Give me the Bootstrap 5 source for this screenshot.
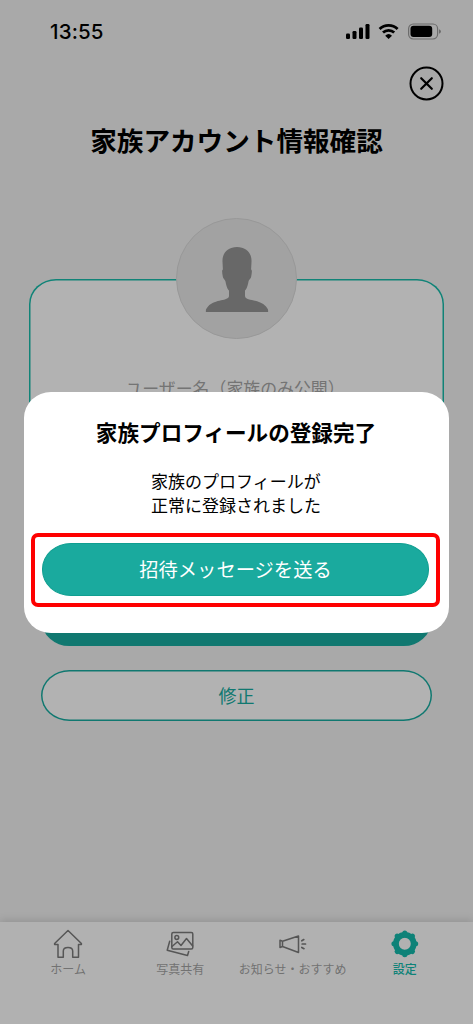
<!DOCTYPE html>
<html lang="ja">
<head>
<meta charset="utf-8">
<meta name="viewport" content="width=device-width, initial-scale=1">
<title>家族アカウント情報確認</title>
<link href="https://cdn.jsdelivr.net/npm/bootstrap@5.3.0/dist/css/bootstrap.min.css" rel="stylesheet">
<style>
  body { font-family: "Noto Sans CJK JP", sans-serif; background: #a9a9a9; color: #000; height: 1024px; overflow: hidden; line-height: 1; }
  svg { display: block; flex: none; }
  .status-bar { height: 63px; padding: 1px 32px 0 50px; }
  .clock { font: 500 20.5px/1 Inter, sans-serif; letter-spacing: .15px; }
  .close-row { height: 41px; padding-right: 29px; }
  .page-title { font-size: 26.6px; font-weight: 700; line-height: 36px; margin: 18px 0 0; }
  .profile { margin: 121px 29px 0; height: 330px; padding-top: 1px; box-shadow: inset 0 0 0 1.5px #108377; border-radius: 27px / 25px; background: #b2b2b2; }
  .avatar { width: 121px; height: 121px; margin-top: -62px; background: #a2a2a2; border: 1px solid #989898; }
  .avatar svg { transform: translate(.5px, 1px); }
  .field-label { font-size: 16.9px; color: #747474; margin-top: 39px; line-height: 20px; white-space: nowrap; font-weight: 400; transform: translateX(-1.5px); }
  .action-list { margin: -12px 41px 0; }
  .pill { border-radius: 29px / 26px; border: 0; padding: 0; font-weight: 400; line-height: 1; }
  .pill-confirm { background: #107870; height: 49px; margin: 0 1px; }
  .pill-edit { background: #b2b2b2; height: 51px; box-shadow: inset 0 0 0 1.5px #107870; color: #107870; font-size: 18px; margin-top: 24px; padding-bottom: 2px; }
  .tabs { height: 102px; background: #b1b1b1; box-shadow: 0 -2px 8px rgba(0,0,0,.13); padding: 7px 12px 0; }
  .tab-item { font-size: 12px; color: #727272; gap: 4px; white-space: nowrap; }
  .tab-item.current { color: #0e8278; font-weight: 500; }
  .dialog-box { width: 424.5px; height: 241px; border-radius: 27px / 26px; background: #fff; padding: 26px 8px 0 7px; }
  .dialog-title { font-size: 21.6px; font-weight: 700; line-height: 28px; }
  .dialog-text { font-size: 17px; line-height: 24.5px; margin: 23px 0 15px; }
  .focus-frame { border: 4px solid #fe0000; border-radius: 7px; height: 74px; width: 409px; padding: 6px 7px 0; margin-left: -2px; }
  .pill-send { background: #1aaa9e; border: 1px solid #109f91; color: #fff; font-size: 19.3px; height: 53px; width: 387px; padding: 2px 0 0 1px; }
</style>
</head>
<body class="d-flex flex-column">
  <header class="status-bar d-flex align-items-center justify-content-between">
    <span class="clock">13:55</span>
    <div class="d-flex align-items-center">
      <svg width="96" height="18" viewBox="0 0 96 18">
        <g><rect x="1" y="10.500" width="4" height="5.500" rx="1.200"/><rect x="7.500" y="8" width="4" height="8" rx="1.200"/><rect x="14" y="4.500" width="4" height="11.500" rx="1.200"/><rect x="20.500" y="1" width="4" height="15" rx="1.200"/></g>
        <g fill="none" stroke="#000" stroke-width="2.800"><path d="M34.600 5.900a13 13 0 0 1 18 0"/><path d="M38 9.500a8.200 8.200 0 0 1 11.200 0"/></g>
        <path d="M40.200 12.700a5 5 0 0 1 6.800 0L43.600 16Z"/>
        <rect x="63.600" y="1" width="29" height="15" rx="4.700" fill="none" stroke="#6c6c6c" stroke-width="1.200"/>
        <rect x="65.500" y="2.800" width="21.700" height="11.200" rx="3"/>
        <path d="M94 6.200q2 .7 2 2.300t-2 2.300z" fill="#6c6c6c"/>
      </svg>
    </div>
  </header>
  <div class="close-row d-flex justify-content-end align-items-center">
    <svg width="35" height="35" viewBox="0 0 35 35" fill="none" stroke="#000" stroke-width="2" stroke-linecap="round"><circle cx="17.500" cy="17.500" r="16"/><path d="m12.200 12.200 10.600 10.600m0-10.600L12.200 22.800" stroke-width="2.200"/></svg>
  </div>
  <h1 class="page-title text-center">家族アカウント情報確認</h1>

  <section class="profile d-flex flex-column align-items-center flex-shrink-0">
    <div class="avatar rounded-circle d-flex justify-content-center align-items-center flex-shrink-0">
      <svg width="63" height="65" viewBox="0 0 63 65" fill="#686868"><path d="M31.500 0C22 0 16.500 6.500 17 15L17.400 22.500C16.200 23 16.600 26 17.300 29.500 18 32.500 19 31.500 20 34.500 21 40 22 42 23.500 43.500V49C23 54.500 10 51.500 2.500 59.500 .5 62 0 63 .3 65H62.700C63 63 62.500 62 60.500 59.500 53 51.500 40 54.500 39.500 49V43.500C41 42 42 40 43 34.500 44 31.500 45 32.500 45.700 29.500 46.400 26 46.800 23 45.600 22.500L46 15C46.500 6.500 41 0 31.500 0Z"/></svg>
    </div>
    <div class="field-label">ユーザー名（家族のみ公開）</div>
  </section>
  <div class="action-list d-flex flex-column">
    <button class="btn pill pill-confirm" type="button" aria-label="登録"></button>
    <button class="btn pill pill-edit" type="button">修正</button>
  </div>

  <nav class="tabs mt-auto flex-shrink-0">
    <div class="row g-0">
      <div class="col-3 tab-item d-flex flex-column align-items-center">
        <svg width="30" height="30" viewBox="0 0 30 30" fill="none" stroke="#565656" stroke-width="1.500" stroke-linejoin="round"><path d="M15 1.500 1.600 14.500V15.500H5V28.200H10.300V22Q10.300 18.500 15 18.500T19.700 22V28.200H25.500V15.500H28.400V14.500Z"/></svg>
        <span>ホーム</span>
      </div>
      <div class="col-3 tab-item d-flex flex-column align-items-center">
        <svg width="30" height="30" viewBox="0 0 30 30" fill="none" stroke="#565656" stroke-width="1.500" stroke-linejoin="round" stroke-linecap="round"><rect x="6.800" y="3.500" width="21" height="16.500" rx="1.500"/><circle cx="11.800" cy="8.500" r="1.900"/><path d="m7 17.500 5.500-4.700 3.500 3.700 5.500-7 6.200 7.500M4.700 12.200 2.200 21.300 22.500 26.500 23.700 22.500"/></svg>
        <span>写真共有</span>
      </div>
      <div class="col-3 tab-item d-flex flex-column align-items-center">
        <svg width="30" height="30" viewBox="0 0 30 30" fill="none" stroke="#565656" stroke-width="1.500" stroke-linejoin="round" stroke-linecap="round"><path d="M2 11.300 4.500 12.200 20.500 7V23.500L4.500 17.500 2 18.500ZM4.500 12.200V17.500"/><path d="m23.800 11.800 2-1.200M24.200 15h3.300M23.800 18.500l2.200 1.200" stroke-width="1.700"/></svg>
        <span>お知らせ・おすすめ</span>
      </div>
      <div class="col-3 tab-item current d-flex flex-column align-items-center">
        <svg width="30" height="30" viewBox="0 0 30 30" fill="none" stroke="#0e8278"><circle cx="14.800" cy="14.800" r="8.900" stroke-width="5.800"/><path d="M14.800 3.900v2M14.800 23.700v2M3.900 14.800h2M23.700 14.800h2M7.100 7.100l1 1M21.500 21.500l1 1M22.500 7.100l-1 1M8.100 21.500l-1 1" stroke-width="5" stroke-linecap="round"/></svg>
        <span>設定</span>
      </div>
    </div>
  </nav>

  <div class="position-fixed top-0 start-0 w-100 h-100 d-flex align-items-center justify-content-center">
    <div class="dialog-box d-flex flex-column align-items-center" role="dialog" aria-modal="true">
      <h2 class="dialog-title m-0">家族プロフィールの登録完了</h2>
      <p class="dialog-text">家族のプロフィールが<br>正常に登録されました</p>
      <div class="focus-frame">
        <button class="btn pill pill-send" type="button">招待メッセージを送る</button>
      </div>
    </div>
  </div>
<script src="https://cdn.jsdelivr.net/npm/bootstrap@5.3.0/dist/js/bootstrap.bundle.min.js"></script>
</body>
</html>
